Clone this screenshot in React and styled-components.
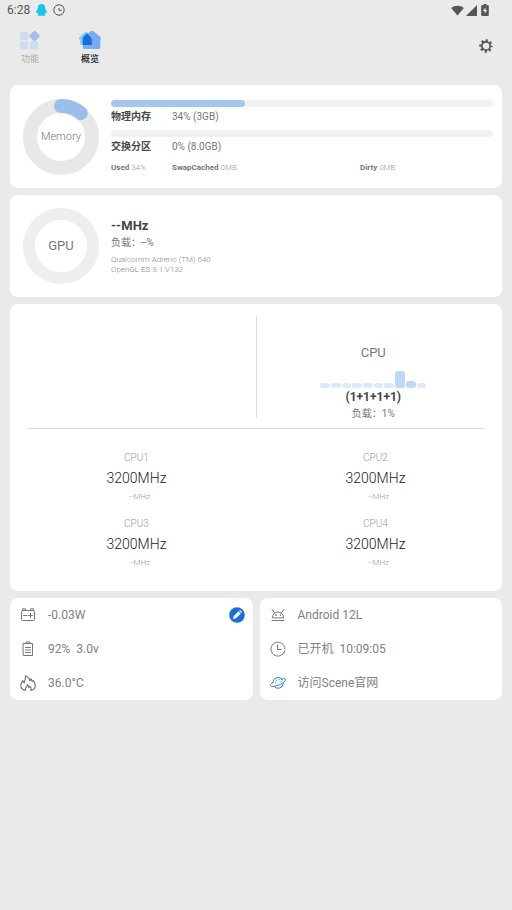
import React from "react";
import styled, { createGlobalStyle } from "styled-components";

const Global = createGlobalStyle`
  *, *::before, *::after { box-sizing: border-box; }
  body {
    margin: 0;
    background: #eaeaea;
    color: #777;
    font-family: Roboto, "Noto Sans CJK SC", sans-serif;
    font-size: 12px;
    line-height: 16px;
  }
  button { font: inherit; color: inherit; border: 0; padding: 0; background: none; cursor: pointer; }
  a { color: inherit; text-decoration: none; }
  svg { display: block; flex: none; }
  p, h2 { margin: 0; font-size: inherit; font-weight: inherit; }
`;

const Page = styled.div`
  min-height: 100vh;
`;

const StatusBar = styled.div`
  display: flex;
  align-items: center;
  justify-content: space-between;
  height: 20px;
  padding: 0 23px 0 7px;
  color: #555;
`;

const StatusGroup = styled.div`
  display: flex;
  align-items: center;
  gap: ${(p) => p.$gap}px;
`;

const Time = styled.span`
  font-size: 12px;
  line-height: 20px;
`;

const Header = styled.header`
  display: flex;
  align-items: center;
  justify-content: space-between;
  height: 58px;
  padding: 0 19px 6px 0;
`;

const Tabs = styled.nav`
  display: flex;
`;

const Tab = styled.button`
  display: flex;
  flex-direction: column;
  align-items: center;
  width: 60px;
  padding-top: 4px;
  font-size: 9px;
  line-height: 14px;
  gap: 2px;
  color: ${(p) => (p.$active ? "#222" : "#aaa")};
  font-weight: ${(p) => (p.$active ? 500 : 400)};
`;

const Main = styled.main`
  display: flex;
  flex-direction: column;
  gap: 7px;
  padding: 7px 10px;
`;

const Card = styled.section`
  background: #fff;
  border-radius: 8px;
`;

const GaugeCard = styled(Card)`
  display: flex;
  align-items: stretch;
  gap: 12px;
  padding: 13px 9px 13px 13px;
`;

const GaugeBox = styled.div`
  display: grid;
  flex: none;
  place-items: center;
  > * { grid-area: 1 / 1; }
`;

const GaugeLabel = styled.span`
  font-size: ${(p) => p.$size}px;
  font-weight: ${(p) => p.$weight};
  color: #777;
`;

const MemoryInfo = styled.div`
  flex: 1;
  display: flex;
  flex-direction: column;
  padding-top: 2px;
`;

const Bar = styled.div`
  height: 7px;
  border-radius: 4px;
  background: #f1f1f1;
  overflow: hidden;
`;

const BarFill = styled.div`
  height: 100%;
  border-radius: 4px;
  background: #a3c7ed;
`;

const MemoryRow = styled.div`
  display: grid;
  grid-template-columns: 61px 1fr;
  font-size: 10px;
  line-height: 20px;
  padding-bottom: 3px;
  color: #777;
`;

const Name = styled.span`
  font-weight: 700;
  color: #484848;
`;

const Details = styled.div`
  display: grid;
  grid-template-columns: 61px 1fr 133px;
  font-size: 8px;
  line-height: 15px;
  color: #999;
  font-weight: 300;
  b { color: #777; font-weight: 700; }
`;

const GpuInfo = styled.div`
  display: flex;
  flex-direction: column;
  padding-top: 9px;
`;

const GpuFreq = styled.h2`
  && { font-size: 13px; font-weight: 700; }
  line-height: 18px;
  color: #444;
`;

const Load = styled.p`
  && { font-size: ${(p) => p.$size}px; }
  line-height: 16px;
  color: #777;
`;

const GpuDetail = styled.p`
  && { font-size: 8px; font-weight: 300; }
  line-height: 10px;
  color: #888;
  padding-top: ${(p) => (p.$first ? 4 : 0)}px;
`;

const CpuTop = styled.div`
  display: grid;
  grid-template-columns: 1fr 1px 1fr;
  padding: 12px 12px 6px;
`;

const VerticalRule = styled.div`
  height: 102px;
  background: #dedede;
`;

const CpuSummary = styled.div`
  grid-column: 3;
  display: flex;
  flex-direction: column;
  align-items: center;
  padding-top: 28px;
`;

const CpuTitle = styled.h2`
  && { font-size: 13px; }
  line-height: 18px;
  color: #777;
`;

const Chart = styled.div`
  display: flex;
  align-items: flex-end;
  gap: 1px;
  width: 106px;
  height: 26px;
`;

const ChartBar = styled.div`
  flex: 1;
  border-radius: 3px;
  background: ${(p) => (p.$strong ? "#bed9f8" : "#dce9f9")};
`;

const CoreGroups = styled.p`
  && { font-size: 12px; font-weight: 700; }
  line-height: 18px;
  color: #444;
`;

const Rule = styled.hr`
  height: 1px;
  margin: 0 17px;
  border: 0;
  background: #ddd;
`;

const Cores = styled.div`
  display: grid;
  grid-template-columns: 1fr 1fr;
  row-gap: 12px;
  padding: 21px 7px;
`;

const Core = styled.div`
  display: flex;
  flex-direction: column;
  align-items: center;
`;

const CoreName = styled.span`
  font-size: 10px;
  line-height: 16px;
  font-weight: 300;
  color: #999;
`;

const CoreFreq = styled.span`
  font-size: 14px;
  line-height: 24px;
  font-weight: 300;
  color: #222;
`;

const CoreRange = styled.span`
  padding-left: 6px;
  font-size: 8px;
  line-height: 14px;
  font-weight: 300;
  color: #999;
`;

const InfoGrid = styled.div`
  display: grid;
  grid-template-columns: 1fr 1fr;
  gap: 7px;
`;

const InfoRow = styled.div`
  display: flex;
  align-items: center;
  gap: 12px;
  height: 34px;
  padding: 0 8px 0 10px;
  color: #808080;
  white-space: pre;
`;

const Spacer = styled.span`
  flex: 1;
`;

function Gauge({ label, size, weight = 400, thickness, track, share = 0 }) {
  const r = 38 - thickness / 2;
  const length = 2 * Math.PI * r;
  return (
    <GaugeBox>
      <svg width="76" height="76" viewBox="0 0 76 76">
        <circle cx="38" cy="38" r={r} fill="none" stroke={track} strokeWidth={thickness} />
        {share > 0 && (
          <circle cx="38" cy="38" r={r} fill="none" stroke="#99bfea" strokeWidth={thickness}
            strokeLinecap="round" strokeDasharray={`${length * share} ${length}`} transform="rotate(-90 38 38)" />
        )}
      </svg>
      <GaugeLabel $size={size} $weight={weight}>{label}</GaugeLabel>
    </GaugeBox>
  );
}

function Line({ children, color = "#777", size = 16 }) {
  return (
    <svg width={size} height={size} viewBox="0 0 16 16" fill="none" stroke={color} strokeWidth="1"
      strokeLinecap="round" strokeLinejoin="round" aria-hidden="true">{children}</svg>
  );
}

const Penguin = () => (
  <svg width="11" height="12" viewBox="0 0 11 12" fill="#14c5ef" aria-hidden="true">
    <path d="M5.5 0C3 0 1.900 1.600 1.900 3.600v1.200C.9 6 .1 7.600.3 9c.2.6.8.1 1.300-.6.1.7.400 1.200.900 1.700-.7.300-1 .8-.6 1.300.5.6 2.500.5 3.600 0 1.100.5 3.100.6 3.600 0 .4-.5.1-1-.6-1.300.5-.5.8-1 .9-1.700.5.7 1.100 1.200 1.300.6.2-1.400-.6-3-1.600-4.200V3.600C9.100 1.600 8 0 5.500 0z" />
  </svg>
);

const StatusClock = () => (
  <svg width="12" height="12" viewBox="0 0 12 12" fill="none" stroke="#555" aria-hidden="true">
    <circle cx="6" cy="6" r="5.2" /><path d="M6 4v2.300h2.800" />
  </svg>
);

const Wifi = () => (
  <svg width="13" height="11" viewBox="0 0 14 11" fill="#555" aria-hidden="true">
    <path d="M7 11 .2 2.800C4 -.4 10-.4 13.800 2.800z" />
  </svg>
);

const Signal = () => (
  <svg width="11" height="11" viewBox="0 0 11 11" fill="#555" aria-hidden="true"><path d="M11 0v11H0z" /></svg>
);

const StatusBattery = () => (
  <svg width="8" height="12" viewBox="0 0 8 12" aria-hidden="true">
    <path d="M2.500 0h3v1.200H7c.5 0 .8.300.8.8v9c0 .6-.300.900-.8.900H1c-.5 0-.8-.300-.8-.9V2c0-.5.300-.8.8-.8h1.500z" fill="#555" />
    <path d="M4.500 3 2 7h1.600v2.800L6.200 6H4.500z" fill="#eaeaea" />
  </svg>
);

const FeaturesIcon = () => (
  <svg width="22" height="20" viewBox="0 0 22 20" aria-hidden="true">
    <g fill="#cfdbf0"><rect x="1" y="2" width="8" height="8" rx="1" /><rect x="1" y="11.500" width="8" height="8" rx="1" /><rect x="11" y="11.500" width="8" height="8" rx="1" /></g>
    <rect x="11.500" y="2" width="8" height="8" rx="1" fill="#a6bfe8" transform="rotate(45 15.500 6)" />
  </svg>
);

const HomeIcon = () => (
  <svg width="24" height="20" viewBox="0 0 24 20" aria-hidden="true">
    <path d="M1.300 7.500 6.500 2.600C7.500 1.700 8.500 1.500 9.500 2.400L14 6.500V15H3.500c-.8 0-1.300-.5-1.300-1.300V9.500H1.500C.7 9.300.7 8.200 1.300 7.500z" fill="#7ecbfb" />
    <path d="M12.600 1.300c1-.9 2-.9 3 0l7 6c.8.700.6 1.600-.3 1.900V17.500c0 .9-.6 1.500-1.500 1.500H6.500c-1 0-1.700-.6-1.700-1.500V8.300z" fill="#79abf5" />
    <path d="M7.800 4.200c.6-.6 1.300-.6 1.900 0l3.500 3.600c.4.400.600.8.600 1.300V15H6c-.8 0-1.300-.5-1.300-1.300V8.600c0-.5.200-.9.500-1.300z" fill="#176ee0" />
  </svg>
);

const Gear = () => (
  <svg width="14" height="14" viewBox="0 0 14 14" fill="none" stroke="#555" aria-hidden="true">
    <circle cx="7" cy="7" r="4.200" strokeWidth="1.700" />
    <circle cx="7" cy="7" r="5.700" strokeWidth="2" strokeDasharray="2.200 2.277" strokeDashoffset="1.100" />
  </svg>
);

const Pencil = () => (
  <svg width="16" height="16" viewBox="0 0 16 16" aria-hidden="true">
    <circle cx="8" cy="8" r="7.800" fill="#196fda" />
    <path d="m4 12 .8-3 4.700-4.700 2.300 2.300L7 11.300zM10.200 3.700l.8-.7 2.200 2.200-.7.800z" fill="#fff" />
  </svg>
);

const PowerIcon = () => (
  <Line><rect x="1.500" y="3.500" width="13" height="10" rx="1" /><path d="M2.500 3.500V1.800h3v1.700M10.500 3.500V1.800h3v1.700M3.500 8.500h3.500M8.500 8.500h4M10.500 6.500v4" /></Line>
);

const BatteryIcon = () => (
  <Line><path d="M3.500 2.500h9v12h-9zM6 2.500v-1.500h4v1.500M5.500 6.500h5M5.500 9h5M5.500 11.500h5" /></Line>
);

const FlameIcon = () => (
  <Line>
    <path strokeWidth="1.200" d="M5.500 15.300C2.500 14.700.8 12.800.8 10.400c0-2 1-3.400 2.200-4.700.1 1.200.5 1.800 1.200 2.200C4.500 5.200 6.300 3.600 5.300.8c2.700 1 4.200 2.700 4.500 5 .7-.5 1-1.200 1-2.100 1 .7 1.300 1.500 1.200 2.700.6 0 1-.3 1.300-.8 1.300 1.800 2 3.400 2 5.100 0 2.300-1.900 4.200-4.600 4.700.9-1.700.3-3-.9-4.100-.2.8-.5 1.100-1 1.300.1-1.200-.3-2.200-1.300-3-.1 2.300-2.900 3-2 5.700z" />
  </Line>
);

const AndroidIcon = () => (
  <Line>
    <path d="M2.500 10.500C2.500 7 4.700 5 8 5s5.500 2 5.500 5.500zM4.700 6 2 2.500M11.300 6 14 2.500M2 13.500h12" />
    <circle cx="5.800" cy="8" r=".3" /><circle cx="10.200" cy="8" r=".3" />
  </Line>
);

const ClockIcon = () => (
  <Line><path d="M14.800 9.800A7 7 0 1 1 15 8M14 11.800l-.4.600M7.500 4v4.500H11" /></Line>
);

const PlanetIcon = () => (
  <Line color="#2987d6">
    <path d="M2.800 7.500a5.300 5.300 0 0 1 10-2.200M13.400 8A5.400 5.400 0 0 1 3.700 11.200M11.500 4.200c2-.8 3.600-.8 4 0 .8 1.500-2.300 3.800-6 5.500-4 1.700-8.300 2.500-9 1.200-.4-.8.600-2.200 2.300-3.400" />
    <path d="M6.500 5.300h.1M9 4.500h.1M5.500 7.300h.1M11 6.500h.1" />
  </Line>
);

const coreNames = ["CPU1", "CPU2", "CPU3", "CPU4"];
const loadHistory = [5, 5, 5, 5, 5, 5, 5, 17, 7, 5];

export default function App() {
  return (
    <Page>
      <Global />
      <StatusBar>
        <StatusGroup $gap={6}><Time>6:28</Time><Penguin /><StatusClock /></StatusGroup>
        <StatusGroup $gap={2}><Wifi /><Signal /><span /><StatusBattery /></StatusGroup>
      </StatusBar>
      <Header>
        <Tabs>
          <Tab><FeaturesIcon />功能</Tab>
          <Tab $active aria-current="page"><HomeIcon />概览</Tab>
        </Tabs>
        <button aria-label="设置"><Gear /></button>
      </Header>
      <Main>
        <GaugeCard>
          <Gauge label="Memory" size={11} weight={300} thickness={14} track="#e8e8e8" share={0.11} />
          <MemoryInfo>
            <Bar><BarFill style={{ width: "35%" }} /></Bar>
            <MemoryRow><Name>物理内存</Name><span>34% (3GB)</span></MemoryRow>
            <Bar />
            <MemoryRow><Name>交换分区</Name><span>0% (8.0GB)</span></MemoryRow>
            <Details>
              <span><b>Used</b> 34%</span>
              <span><b>SwapCached</b> 0MB</span>
              <span><b>Dirty</b> 0MB</span>
            </Details>
          </MemoryInfo>
        </GaugeCard>
        <GaugeCard>
          <Gauge label="GPU" size={13} thickness={12} track="#eeeeee" />
          <GpuInfo>
            <GpuFreq>--MHz</GpuFreq>
            <Load $size={10}>负载：--%</Load>
            <GpuDetail $first>Qualcomm Adreno (TM) 640</GpuDetail>
            <GpuDetail>OpenGL ES 3.1 V132</GpuDetail>
          </GpuInfo>
        </GaugeCard>
        <Card>
          <CpuTop>
            <span />
            <VerticalRule />
            <CpuSummary>
              <CpuTitle>CPU</CpuTitle>
              <Chart>
                {loadHistory.map((h, i) => <ChartBar key={i} $strong={h > 5} style={{ height: h }} />)}
              </Chart>
              <CoreGroups>(1+1+1+1)</CoreGroups>
              <Load $size={10}>负载：1%</Load>
            </CpuSummary>
          </CpuTop>
          <Rule />
          <Cores>
            {coreNames.map((name) => (
              <Core key={name}>
                <CoreName>{name}</CoreName>
                <CoreFreq>3200MHz</CoreFreq>
                <CoreRange>--MHz</CoreRange>
              </Core>
            ))}
          </Cores>
        </Card>
        <InfoGrid>
          <Card>
            <InfoRow><PowerIcon />-0.03W<Spacer /><button aria-label="编辑"><Pencil /></button></InfoRow>
            <InfoRow><BatteryIcon />92%  3.0v</InfoRow>
            <InfoRow><FlameIcon />36.0°C</InfoRow>
          </Card>
          <Card>
            <InfoRow><AndroidIcon />Android 12L</InfoRow>
            <InfoRow><ClockIcon />已开机  10:09:05</InfoRow>
            <InfoRow as="a" href="#"><PlanetIcon />访问Scene官网</InfoRow>
          </Card>
        </InfoGrid>
      </Main>
    </Page>
  );
}
